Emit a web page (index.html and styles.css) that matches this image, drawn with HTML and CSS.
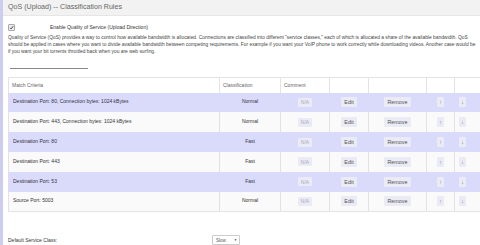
FILE: index.html
```html
<!DOCTYPE html>
<html lang="en">
<head>
  <meta charset="UTF-8">
  <title>QoS (Upload) -- Classification Rules</title>
  <link rel="stylesheet" href="styles.css">
</head>
<body>
  <div class="title">QoS (Upload) -- Classification Rules</div>

  <div class="content">
    <div class="enable-row">
      <span class="check">
        <svg width="5" height="5" viewBox="0 0 10 10"><path d="M2 5.5 L4.2 7.8 L8.5 2.2" fill="none" stroke="#333" stroke-width="1.8"/></svg>
      </span>
      <span class="enable-label">Enable Quality of Service (Upload Direction)</span>
    </div>

    <p class="intro">Quality of Service (QoS) provides a way to control how available bandwidth is allocated. Connections are classified into different "service classes," each of which is allocated a share of the available bandwidth. QoS should be applied in cases where you want to divide available bandwidth between competing requirements. For example if you want your VoIP phone to work correctly while downloading videos. Another case would be if you want your bit torrents throttled back when you are web surfing.</p>

    <div class="divider"></div>

    <table class="rules">
      <tr class="head">
        <th class="c-match">Match Criteria</th>
        <th class="c-class">Classification</th>
        <th class="c-comment">Comment</th>
        <th class="c-edit"></th>
        <th class="c-remove"></th>
        <th class="c-up"></th>
        <th class="c-down"></th>
      </tr>
      <tr class="odd">
        <td>Destination Port: 80, Connection bytes: 1024 kBytes</td>
        <td class="center">Normal</td>
        <td class="center"><span class="btn na">N/A</span></td>
        <td class="center"><span class="btn">Edit</span></td>
        <td class="center"><span class="btn">Remove</span></td>
        <td class="center"><span class="btn arrow">&uarr;</span></td>
        <td class="down"><span class="btn arrow">&darr;</span></td>
      </tr>
      <tr class="even">
        <td>Destination Port: 443, Connection bytes: 1024 kBytes</td>
        <td class="center">Normal</td>
        <td class="center"><span class="btn na">N/A</span></td>
        <td class="center"><span class="btn">Edit</span></td>
        <td class="center"><span class="btn">Remove</span></td>
        <td class="center"><span class="btn arrow">&uarr;</span></td>
        <td class="down"><span class="btn arrow">&darr;</span></td>
      </tr>
      <tr class="odd">
        <td>Destination Port: 80</td>
        <td class="center">Fast</td>
        <td class="center"><span class="btn na">N/A</span></td>
        <td class="center"><span class="btn">Edit</span></td>
        <td class="center"><span class="btn">Remove</span></td>
        <td class="center"><span class="btn arrow">&uarr;</span></td>
        <td class="down"><span class="btn arrow">&darr;</span></td>
      </tr>
      <tr class="even">
        <td>Destination Port: 443</td>
        <td class="center">Fast</td>
        <td class="center"><span class="btn na">N/A</span></td>
        <td class="center"><span class="btn">Edit</span></td>
        <td class="center"><span class="btn">Remove</span></td>
        <td class="center"><span class="btn arrow">&uarr;</span></td>
        <td class="down"><span class="btn arrow">&darr;</span></td>
      </tr>
      <tr class="odd">
        <td>Destination Port: 53</td>
        <td class="center">Fast</td>
        <td class="center"><span class="btn na">N/A</span></td>
        <td class="center"><span class="btn">Edit</span></td>
        <td class="center"><span class="btn">Remove</span></td>
        <td class="center"><span class="btn arrow">&uarr;</span></td>
        <td class="down"><span class="btn arrow">&darr;</span></td>
      </tr>
      <tr class="even">
        <td>Source Port: 5003</td>
        <td class="center">Normal</td>
        <td class="center"><span class="btn na">N/A</span></td>
        <td class="center"><span class="btn">Edit</span></td>
        <td class="center"><span class="btn">Remove</span></td>
        <td class="center"><span class="btn arrow">&uarr;</span></td>
        <td class="down"><span class="btn arrow">&darr;</span></td>
      </tr>
    </table>

    <div class="default-row">
      <span class="default-label">Default Service Class:</span>
      <span class="select">Slow <span class="caret">&#9660;</span></span>
    </div>
  </div>
</body>
</html>
```

FILE: styles.css
```css
body {
  margin: 0;
  font-family: "Liberation Sans", Arial, sans-serif;
  color: #444;
  background: #fff;
  border-left: 3px solid #cdcdf0;
  height: 245px;
  overflow: hidden;
}

.title {
  height: 15px;
  line-height: 15px;
  padding-left: 5px;
  font-size: 7.1px;
  color: #666;
  background: #f2f2f2;
  border-bottom: 1px solid #e6e6e6;
}

.content {
  padding-left: 5px;
}

.enable-row {
  display: flex;
  align-items: center;
  height: 8px;
  margin-top: 7px;
}

.check {
  display: flex;
  align-items: center;
  justify-content: center;
  width: 5px;
  height: 5px;
  border: 1px solid #aaa;
  border-radius: 1px;
  background: #eee;
}

.enable-label {
  margin-left: 35px;
  font-size: 5px;
  color: #333;
}

.intro {
  margin: 3px 0 0;
  font-size: 4.88px;
  line-height: 7px;
  color: #444;
  width: 468px;
}

.divider {
  width: 78px;
  margin: 13px 0 0 2px;
  border-top: 1px solid #888;
}

.rules {
  margin-top: 8px;
  width: 472px;
  border-collapse: collapse;
  font-size: 5px;
  border: 1px solid #e3e3e3;
  table-layout: fixed;
}

.rules th,
.rules td {
  box-sizing: border-box;
}

.rules th {
  height: 15px;
  padding: 0 3px;
  text-align: left;
  font-weight: normal;
  color: #666;
  background: #fff;
  border-left: 1px solid #e3e3e3;
}

.rules td {
  height: 19.85px;
  padding: 0 3px 2px;
  color: #333;
  border-left: 1px solid #e3e3e3;
  vertical-align: middle;
}

.rules tr.odd td {
  background: #dadafa;
  border-left-color: #dadafa;
  color: #334;
}

.rules tr.even td {
  background: #fafafa;
}

.c-match { width: 211px; }
.c-class { width: 61px; }
.c-comment { width: 49px; }
.c-edit { width: 39px; }
.c-remove { width: 58px; }
.c-up { width: 28px; }
.c-down { width: 26px; }

.center {
  text-align: center;
}

.rules td.down {
  text-align: left;
  padding-left: 4px;
}

.rules td:first-child {
  text-align: left;
  padding-left: 4px;
}

.btn {
  display: inline-block;
  padding: 2px 3px;
  line-height: 6px;
  font-size: 5.4px;
  color: #555;
  background: #ebebf6;
  border-radius: 1px;
  transform: translateY(1px);
}

.btn.na {
  padding: 1.5px 3px;
  font-size: 5px;
  color: #aab;
}

.btn.arrow {
  padding: 2px 2px;
  font-size: 5.8px;
  color: #7a7a90;
}

.default-row {
  display: flex;
  align-items: center;
  margin-top: 22px;
  height: 12px;
}

.default-label {
  font-size: 5px;
  color: #333;
  width: 204px;
}

.select {
  display: inline-flex;
  align-items: center;
  justify-content: space-between;
  box-sizing: border-box;
  width: 28px;
  height: 10px;
  padding: 0 2px 0 3px;
  font-size: 4.5px;
  color: #555;
  border: 1px solid #ccc;
  border-radius: 1px;
  background: #fff;
}

.caret {
  font-size: 3px;
  color: #333;
}
```
